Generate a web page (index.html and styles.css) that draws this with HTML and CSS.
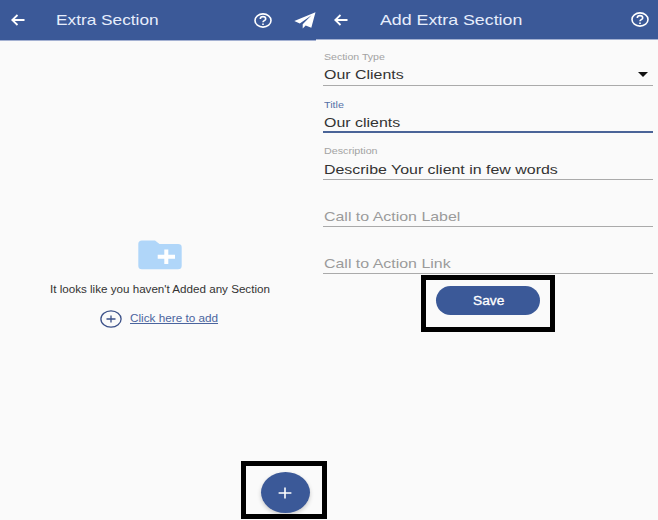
FILE: index.html
```html
<!DOCTYPE html>
<html lang="en">
<head>
<meta charset="utf-8">
<title>Extra Section</title>
<link rel="stylesheet" href="styles.css">
</head>
<body>
<main class="screens">
  <section class="screen list">
    <header class="bar">
      <svg class="back" viewBox="0 0 14 12"><path d="M13.5 6H1.5M6.5 1L1.2 6l5.3 5"/></svg>
      <h1 class="heading"><span class="wide">Extra Section</span></h1>
      <svg class="help" viewBox="0 0 18 15"><ellipse cx="9" cy="7.5" rx="8" ry="6.6"/><path d="M6.3 5.9c0-3 5.4-3 5.4 0 0 1.700-2.700 1.800-2.700 3.300M9 10.500v1.400"/></svg>
      <svg class="send" viewBox="0 0 22 17"><path d="M21.500.3L.3 9l5.500 2.500L17.500 3.300 8.700 12.300v4.300l3-3.200 5.600 2.300z"/></svg>
    </header>
    <div class="empty">
      <svg class="folder" viewBox="0 0 44 30"><path class="shape" d="M4 .5h13l4.500 3.500H40q3.700 0 3.700 3.300v18.500q0 3.500-3.700 3.500H4Q.3 29.300.3 25.800V4Q.3.5 4 .5z"/><path class="cross" d="M28.300 9.500v14.500M19.700 16.700h17.300"/></svg>
      <p class="message"><span class="wide">It looks like you haven't Added any Section</span></p>
      <div class="add">
        <svg class="ring" viewBox="0 0 22 18"><ellipse cx="11" cy="9" rx="10.100" ry="8.200"/><path d="M11 5.400v7.200M6.500 9h9"/></svg>
        <a class="link"><span class="wide">Click here to add</span></a>
      </div>
    </div>
    <div class="fab-frame">
      <div class="fab"><svg viewBox="0 0 14 12"><path d="M7 .6v10.800M.6 6h12.800"/></svg></div>
    </div>
  </section>
  <section class="screen form">
    <header class="bar">
      <svg class="back" viewBox="0 0 14 12"><path d="M13.500 6H1.500M6.500 1L1.200 6l5.300 5"/></svg>
      <h1 class="heading"><span class="wide">Add Extra Section</span></h1>
      <svg class="help" viewBox="0 0 18 15"><ellipse cx="9" cy="7.500" rx="8" ry="6.600"/><path d="M6.300 5.900c0-3 5.400-3 5.400 0 0 1.700-2.700 1.800-2.700 3.300M9 10.500v1.400"/></svg>
    </header>
    <div class="fields">
      <div class="field">
        <div class="label"><span class="wide">Section Type</span></div>
        <div class="value"><span class="wide">Our Clients</span><i class="caret"></i></div>
      </div>
      <div class="field active">
        <div class="label"><span class="wide">Title</span></div>
        <div class="value"><span class="wide">Our clients</span></div>
      </div>
      <div class="field description">
        <div class="label"><span class="wide">Description</span></div>
        <div class="value"><span class="wide">Describe Your client in few words</span></div>
      </div>
      <div class="field blank">
        <div class="label"></div>
        <div class="value"><span class="wide">Call to Action Label</span></div>
      </div>
      <div class="field blank">
        <div class="label"></div>
        <div class="value"><span class="wide">Call to Action Link</span></div>
      </div>
    </div>
    <div class="save-frame"><div class="save"><span class="wide">Save</span></div></div>
  </section>
</main>
</body>
</html>
```
FILE: styles.css
```css
* { box-sizing: border-box; }
body {
  margin: 0;
  width: 658px;
  height: 520px;
  overflow: hidden;
  background: #fafafa;
  font-family: "Liberation Sans", sans-serif;
  color: #333;
}
svg { display: block; flex: none; fill: none; }
.screens { display: grid; grid-template-columns: 316px 342px; height: 520px; }
.screen { display: flex; flex-direction: column; position: relative; height: 520px; }
.wide {
  display: inline-block;
  white-space: nowrap;
  transform: scaleX(var(--stretch, 1.208));
  transform-origin: 0 50%;
}

.bar {
  display: flex;
  align-items: center;
  flex: none;
  height: 41px;
  background: #3b5998;
  border-bottom: 1px solid #a4b1d2;
  color: #e6edfc;
}
.form .bar { height: 40px; }
.back { width: 14px; height: 12px; margin-left: 11px; stroke: #fff; stroke-width: 1.8; }
.heading {
  flex: 1;
  margin: 0 0 0 30.5px;
  font-size: 14.5px;
  line-height: 18px;
  font-weight: 400;
  --stretch: 1.19;
}
.help { width: 18px; height: 15px; stroke: #fff; stroke-width: 1.6; }
.list .help { margin-right: 22px; }
.send { width: 22px; height: 17px; fill: #fff; }
.form .back { margin-left: 18px; }
.form .heading { margin-left: 32px; --stretch: 1.226; }
.form .help { margin-right: 9px; }

.empty { display: flex; flex-direction: column; align-items: center; padding-top: 199px; }
.folder { width: 44px; height: 30px; margin-left: 4px; }
.shape { fill: #b0d6f9; }
.cross { stroke: #fff; stroke-width: 4; }
.message {
  width: 216px;
  margin: 13px 0 0;
  font-size: 10px;
  line-height: 14px;
  --stretch: 1.162;
}
.add { display: flex; align-items: center; gap: 8px; width: 116px; margin-top: 13px; }
.ring { width: 22px; height: 18px; stroke: #3b5088; stroke-width: 1.3; }
.link {
  font-size: 10px;
  line-height: 14px;
  color: #4a649e;
  --stretch: 1.173;
}
.link .wide { text-decoration: underline; }

.fab-frame {
  position: absolute;
  left: 241px;
  top: 461px;
  z-index: 1;
  width: 86px;
  height: 58px;
  padding: 6px 0 0 14.5px;
  border: 5px solid #000;
}
.fab {
  display: grid;
  place-items: center;
  width: 49px;
  height: 41px;
  border-radius: 50%;
  background: #3b5998;
  box-shadow: 0 2px 4px #0003;
}
.fab svg { width: 14px; height: 12px; stroke: #fff; stroke-width: 1.6; }

.fields { display: flex; flex-direction: column; padding: 9px 5px 0 7px; }
.field { height: 47px; }
.label { height: 15px; padding-left: 1px; font-size: 9.5px; line-height: 15px; color: #a3a3a3; --stretch: 1.11; }
.value {
  display: flex;
  align-items: center;
  justify-content: space-between;
  height: 22px;
  padding: 0 5px 0 1px;
  border-bottom: 1px solid #aaa;
  font-size: 13.2px;
  line-height: 21px;
}
.active .label { line-height: 17px; color: #5572a8; --stretch: 1.13; }
.active .value { padding-top: 2px; border-bottom: 2px solid #4a6498; }
.description .label { line-height: 17px; font-size: 9px; --stretch: 1.19; }
.description .value, .blank .value { padding-top: 2px; }
.blank .value { color: #9b9b9b; }
.caret { border: 5px solid transparent; border-top: 5px solid #111; border-bottom: 0; }

.save-frame {
  position: absolute;
  left: 105px;
  top: 275px;
  width: 134px;
  height: 57px;
  padding: 6px 10px;
  border: 5px solid #000;
}
.save {
  width: 104px;
  height: 29px;
  padding-left: 37px;
  border-radius: 15px;
  background: #3b5998;
  color: #fff;
  font-size: 12.5px;
  line-height: 30px;
  -webkit-text-stroke: 0.3px #fff;
  --stretch: 1.1;
}
```
